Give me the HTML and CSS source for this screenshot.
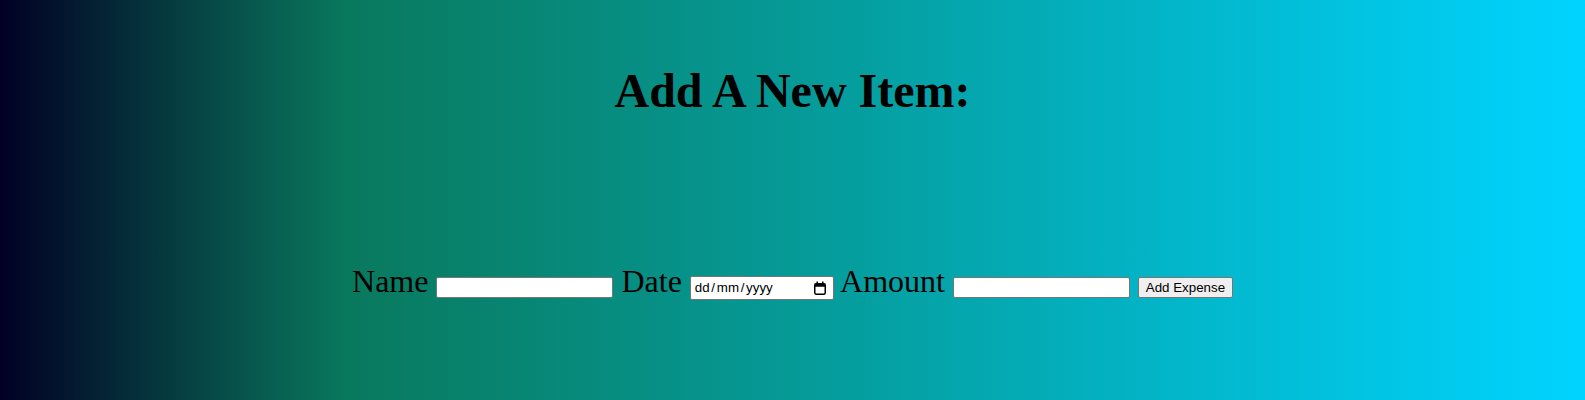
FILE: index.html
```html
<!DOCTYPE html>
<html>
<head>
<meta charset="utf-8">
<title>Add A New Item</title>
<link rel="stylesheet" href="styles.css">
</head>
<body class="page">
  <h1 class="title">Add A New Item:</h1>
  <form class="expense-form">
    <label class="field-label" for="name">Name</label>
    <input class="text-input" type="text" id="name">
    <label class="field-label" for="date">Date</label>
    <span class="date-box">
      <input class="date-field" type="text" id="date" placeholder="dd / mm / yyyy">
      <svg class="cal-icon" width="14" height="14" viewBox="0 0 14 14" aria-hidden="true">
        <rect x="1.75" y="2.75" width="10.5" height="10.5" rx="1.5" fill="none" stroke="#000" stroke-width="1.5"/>
        <rect x="1.75" y="2.75" width="10.5" height="3" fill="#000"/>
        <rect x="3.5" y="0.5" width="1.5" height="3" fill="#000"/>
        <rect x="9" y="0.5" width="1.5" height="3" fill="#000"/>
      </svg>
    </span>
    <label class="field-label" for="amount">Amount</label>
    <input class="text-input" type="text" id="amount">
    <button class="add-btn" type="button">Add Expense</button>
  </form>
</body>
</html>
```

FILE: styles.css
```css
html, body {
  margin: 0;
  height: 100%;
}
.page {
  margin: 0;
  min-height: 100vh;
  background: linear-gradient(90deg, rgba(2,0,36,1) 0%, rgba(9,121,93,1) 22%, rgba(0,212,255,1) 100%);
  font-family: "Liberation Serif", "Times New Roman", serif;
  color: #000;
  overflow: hidden;
}
.title {
  margin: 0;
  padding-top: 63px;
  text-align: center;
  font-size: 48px;
  font-weight: bold;
  line-height: normal;
}
.expense-form {
  margin: 145px 0 0;
  text-align: center;
  font-size: 32px;
  line-height: normal;
}
.field-label {
  font-size: 32px;
}
.text-input {
  box-sizing: border-box;
  width: 177px;
  height: 21px;
  padding: 1px 2px;
  border: 1px solid #767676;
  border-radius: 2px;
  background: #fff;
  font-family: "Liberation Sans", Arial, sans-serif;
  font-size: 13.333px;
  vertical-align: baseline;
}
.date-box {
  box-sizing: border-box;
  display: inline-flex;
  align-items: center;
  width: 144px;
  height: 24px;
  padding: 0 6px 0 4px;
  border: 1px solid #767676;
  border-radius: 2px;
  background: #fff;
  vertical-align: baseline;
}
.date-field {
  flex: 1;
  min-width: 0;
  border: 0;
  padding: 0;
  margin: 0;
  outline: none;
  background: transparent;
  font-family: "Liberation Sans", Arial, sans-serif;
  font-size: 13.333px;
  word-spacing: -2px;
  color: #000;
}
.date-field::placeholder {
  color: #000;
  opacity: 1;
}
.cal-icon {
  flex: none;
  display: block;
}
.add-btn {
  box-sizing: border-box;
  width: 95px;
  height: 21px;
  padding: 1px 6px;
  border: 1px solid #767676;
  border-radius: 2px;
  background: #efefef;
  color: #000;
  font-family: "Liberation Sans", Arial, sans-serif;
  font-size: 13.333px;
  vertical-align: baseline;
}
```
